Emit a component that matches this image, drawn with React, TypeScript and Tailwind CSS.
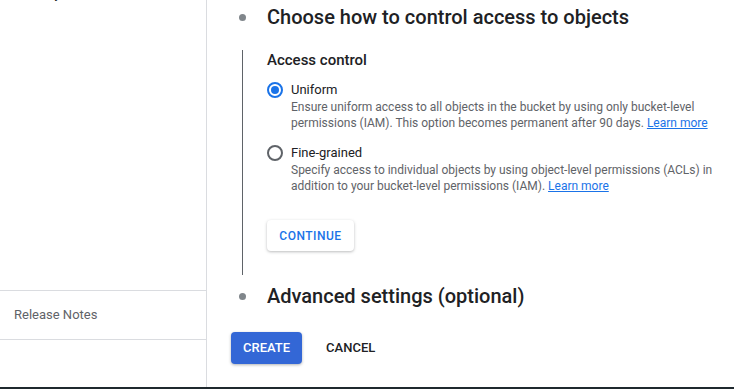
import React from "react"

function Radio({ checked }: { checked: boolean }) {
  return (
    <span
      className={`mt-[1px] flex h-4 w-4 shrink-0 items-center justify-center rounded-full border-2 ${
        checked ? "border-[#1a73e8]" : "border-[#5f6368]"
      }`}
    >
      {checked && <span className="h-2 w-2 rounded-full bg-[#1a73e8]" />}
    </span>
  )
}

function Option({
  checked,
  label,
  children,
}: {
  checked: boolean
  label: string
  children: React.ReactNode
}) {
  return (
    <div className="flex gap-2">
      <Radio checked={checked} />
      <div>
        <div className="text-[13px] leading-[18px] text-[#202124]">{label}</div>
        <p className="text-[12px] leading-[16px] text-[#5f6368]">{children}</p>
      </div>
    </div>
  )
}

function LearnMore() {
  return <a className="text-[#1a73e8] underline underline-offset-1 decoration-[#1a73e8]">Learn more</a>
}

function StepDot() {
  return (
    <div className="flex w-[22px] shrink-0 justify-center">
      <span className="h-[7px] w-[7px] rounded-full bg-[#80868b]" />
    </div>
  )
}

export default function App() {
  return (
    <div
      className="flex h-[389px] w-[734px] flex-col bg-white"
      style={{ fontFamily: "Roboto, 'Liberation Sans', sans-serif" }}
    >
      <div className="flex flex-1 overflow-hidden">
        {/* sidebar */}
        <aside className="flex w-[207px] shrink-0 flex-col border-r border-[#dadce0]">
          <div className="-mt-[14px] pl-[14px] text-[13px] leading-[16px] text-[#202124]">Security</div>
          <div className="flex-1" />
          <div className="mb-[47px] border-y border-[#dadce0]">
            <div className="flex h-[48px] items-center pl-[14px] text-[13px] text-[#5f6368]">Release Notes</div>
          </div>
        </aside>

        {/* main */}
        <main className="min-w-0 flex-1 pl-[24px] pt-[3px]">
          <div className="flex h-[28px] items-center">
            <StepDot />
            <h2 className="ml-[14px] text-[20px] font-medium text-[#202124]">
              Choose how to control access to objects
            </h2>
          </div>

          <div className="flex">
            <div className="flex w-[22px] shrink-0 justify-center pt-[19px]">
              <div className="h-[225px] w-px bg-[#5f6368]" />
            </div>
            <div className="ml-[14px] min-w-0 pr-[18px] pt-[19px]">
              <h3 className="text-[15px] font-medium leading-[20px] text-[#202124]">Access control</h3>
              <div className="mt-[11px]">
                <Option checked label="Uniform">
                  Ensure uniform access to all objects in the bucket by using only bucket-level permissions (IAM). This
                  option becomes permanent after 90 days. <LearnMore />
                </Option>
              </div>
              <div className="mt-[13px]">
                <Option checked={false} label="Fine-grained">
                  Specify access to individual objects by using object-level permissions (ACLs) in addition to your
                  bucket-level permissions (IAM). <LearnMore />
                </Option>
              </div>
              <button className="mt-[26px] h-[31px] w-[87px] rounded text-[12px] font-medium tracking-[0.5px] text-[#1a73e8] shadow-[0_1px_3px_rgba(60,64,67,0.35)]">
                CONTINUE
              </button>
            </div>
          </div>

          <div className="mt-[7px] flex h-[28px] items-center">
            <StepDot />
            <h2 className="ml-[14px] text-[20px] font-medium text-[#202124]">Advanced settings (optional)</h2>
          </div>

          <div className="mt-[22px] flex gap-3">
            <button className="h-[32px] rounded bg-[#3367d6] px-3 text-[13px] font-medium text-white shadow-[0_1px_3px_rgba(60,64,67,0.4)]">
              CREATE
            </button>
            <button className="h-[32px] px-3 text-[13px] font-medium text-[#202124]">CANCEL</button>
          </div>
        </main>
      </div>
      <div className="h-[2px] bg-[#1f292e]" />
    </div>
  )
}
